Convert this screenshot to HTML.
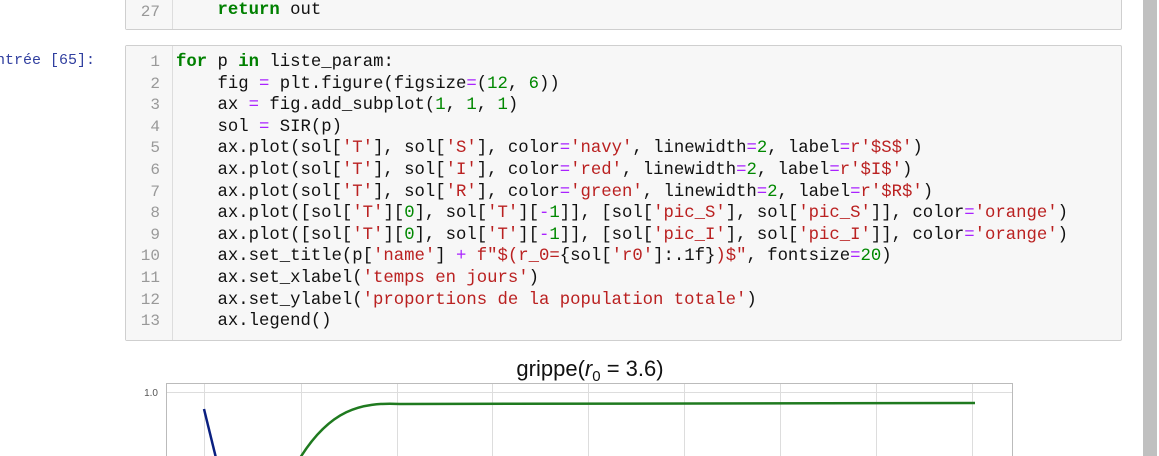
<!DOCTYPE html>
<html><head><meta charset="utf-8"><style>
body{margin:0;width:1159px;height:456px;background:#fff;position:relative;overflow:hidden;font-family:"Liberation Mono",monospace}
.cell{position:absolute;background:#f7f7f7;border:1px solid #cfcfcf;border-radius:2px}
.gut{position:absolute;top:0;bottom:0;border-right:1px solid #ddd;background:#f7f7f7}
.ln{position:absolute;color:#999;font-size:16px;text-align:right;width:22px}
.code{position:absolute;font-size:17.3px;white-space:pre;color:#111;line-height:21.6px}
.k{color:#008000;font-weight:bold}.o{color:#aa22ff}.s{color:#ba2121}.n{color:#080}
.prompt{position:absolute;left:-4px;top:52px;color:#303f9f;font-size:15px}
</style></head><body>
<div class="cell" style="left:125px;top:-7px;width:995px;height:35px">
 <div class="gut" style="left:0;width:46px"></div>
 <div class="ln" style="left:12px;top:9px">27</div>
 <div class="code" style="left:50px;top:6px">    <span class="k">return</span> out</div>
</div>
<div class="prompt">ntrée [65]:</div>
<div class="cell" style="left:125px;top:45px;width:995px;height:294px">
 <div class="gut" style="left:0;width:46px"></div>
 <div class="ln" style="left:12px;top:6px;line-height:21.6px;width:22px">1<br>2<br>3<br>4<br>5<br>6<br>7<br>8<br>9<br>10<br>11<br>12<br>13</div>
 <div class="code" style="left:50px;top:6px"><span class="k">for</span> p <span class="k">in</span> liste_param:
    fig <span class="o">=</span> plt.figure(figsize<span class="o">=</span>(<span class="n">12</span>, <span class="n">6</span>))
    ax <span class="o">=</span> fig.add_subplot(<span class="n">1</span>, <span class="n">1</span>, <span class="n">1</span>)
    sol <span class="o">=</span> SIR(p)
    ax.plot(sol[<span class="s">'T'</span>], sol[<span class="s">'S'</span>], color<span class="o">=</span><span class="s">'navy'</span>, linewidth<span class="o">=</span><span class="n">2</span>, label<span class="o">=</span><span class="s">r'$S$'</span>)
    ax.plot(sol[<span class="s">'T'</span>], sol[<span class="s">'I'</span>], color<span class="o">=</span><span class="s">'red'</span>, linewidth<span class="o">=</span><span class="n">2</span>, label<span class="o">=</span><span class="s">r'$I$'</span>)
    ax.plot(sol[<span class="s">'T'</span>], sol[<span class="s">'R'</span>], color<span class="o">=</span><span class="s">'green'</span>, linewidth<span class="o">=</span><span class="n">2</span>, label<span class="o">=</span><span class="s">r'$R$'</span>)
    ax.plot([sol[<span class="s">'T'</span>][<span class="n">0</span>], sol[<span class="s">'T'</span>][<span class="o">-</span><span class="n">1</span>]], [sol[<span class="s">'pic_S'</span>], sol[<span class="s">'pic_S'</span>]], color<span class="o">=</span><span class="s">'orange'</span>)
    ax.plot([sol[<span class="s">'T'</span>][<span class="n">0</span>], sol[<span class="s">'T'</span>][<span class="o">-</span><span class="n">1</span>]], [sol[<span class="s">'pic_I'</span>], sol[<span class="s">'pic_I'</span>]], color<span class="o">=</span><span class="s">'orange'</span>)
    ax.set_title(p[<span class="s">'name'</span>] <span class="o">+</span> <span class="s">f"$(r_0=</span>{sol[<span class="s">'r0'</span>]:.1f}<span class="s">)$"</span>, fontsize<span class="o">=</span><span class="n">20</span>)
    ax.set_xlabel(<span class="s">'temps en jours'</span>)
    ax.set_ylabel(<span class="s">'proportions de la population totale'</span>)
    ax.legend()</div>
</div>
<div style="position:absolute;left:1143px;top:0;width:14px;height:456px;background:#c0c0c0"></div>
<svg style="position:absolute;left:0;top:0" width="1159" height="456">
 <text x="590" y="376" text-anchor="middle" font-family="Liberation Sans, sans-serif" font-size="22" fill="#111">grippe(<tspan font-style="italic">r</tspan><tspan font-size="15" dy="5">0</tspan><tspan dy="-5"> = 3.6)</tspan></text>
 <rect x="166.5" y="383.5" width="846" height="80" fill="none" stroke="#bbb"/>
 <g stroke="#ddd" stroke-width="1">
  <line x1="204.5" y1="384" x2="204.5" y2="456"/><line x1="301.5" y1="384" x2="301.5" y2="456"/>
  <line x1="397.5" y1="384" x2="397.5" y2="456"/><line x1="492.5" y1="384" x2="492.5" y2="456"/>
  <line x1="588.5" y1="384" x2="588.5" y2="456"/><line x1="684.5" y1="384" x2="684.5" y2="456"/>
  <line x1="780.5" y1="384" x2="780.5" y2="456"/><line x1="876.5" y1="384" x2="876.5" y2="456"/>
  <line x1="972.5" y1="384" x2="972.5" y2="456"/>
  <line x1="167" y1="392.5" x2="1012" y2="392.5"/>
 </g>
 <text x="158" y="396" text-anchor="end" font-family="Liberation Sans, sans-serif" font-size="10" fill="#555">1.0</text>
 <path d="M300 458 C330 410 360 402 400 404 L975 403" fill="none" stroke="#1f7a1f" stroke-width="2.5"/>
 <path d="M204 409 L216 458" fill="none" stroke="#0a1f80" stroke-width="2.5"/>
</svg>
</body></html>
